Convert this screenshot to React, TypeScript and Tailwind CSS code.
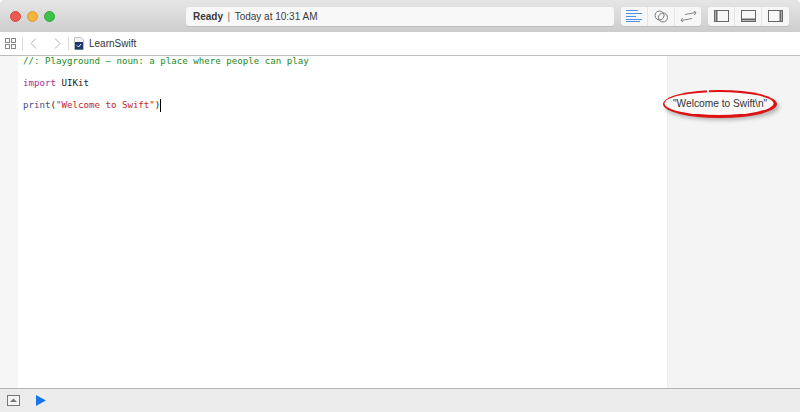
const sans = "font-['Liberation_Sans',Arial,sans-serif]";

function TrafficLights() {
  return (
    <div className="flex gap-[6px]">
      <span className="w-[11px] h-[11px] rounded-full bg-[#ee5a52] border border-[#d8473f]" />
      <span className="w-[11px] h-[11px] rounded-full bg-[#f5b43c] border border-[#dd9e2c]" />
      <span className="w-[11px] h-[11px] rounded-full bg-[#3fc04a] border border-[#30a83b]" />
    </div>
  );
}

function EditorModes() {
  return (
    <div className="flex h-[19px] rounded-[3px] bg-[#f7f7f7] shadow-[0_1px_0_#bdbdbd]">
      <div className="w-[27px] flex items-center justify-center border-r border-[#e6e6e6]">
        <svg width="16" height="12" viewBox="0 0 16 12" stroke="#4a90e8" strokeWidth="1" fill="none">
          <path d="M0 .5h12M0 3.5h16M0 6.5h10M0 9.5h16M0 11.5h14" />
        </svg>
      </div>
      <div className="w-[27px] flex items-center justify-center border-r border-[#e6e6e6]">
        <svg width="15" height="13" viewBox="0 0 15 13" stroke="#777" strokeWidth="1" fill="none">
          <circle cx="5.5" cy="5.5" r="4.5" />
          <circle cx="9" cy="7.5" r="4.5" />
        </svg>
      </div>
      <div className="w-[26px] flex items-center justify-center">
        <svg width="17" height="11" viewBox="0 0 17 11" stroke="#888" strokeWidth="1" fill="none">
          <path d="M5 3.5 L16 1.500M13.500 0l2.500 1.500-1.500 2.500M1 9.500 L12 7.500M2.500 7l-1.500 2.500L3.500 11" />
        </svg>
      </div>
    </div>
  );
}

function PanelToggles() {
  return (
    <div className="flex h-[19px] rounded-[3px] bg-[#f7f7f7] shadow-[0_1px_0_#bdbdbd]">
      <div className="w-[27px] flex items-center justify-center border-r border-[#e6e6e6]">
        <svg width="15" height="12" viewBox="0 0 15 12" stroke="#666" fill="none">
          <rect x=".5" y=".5" width="14" height="11" />
          <path d="M2.5 1v10" strokeWidth="2" />
        </svg>
      </div>
      <div className="w-[27px] flex items-center justify-center border-r border-[#e6e6e6]">
        <svg width="15" height="12" viewBox="0 0 15 12" stroke="#666" fill="none">
          <rect x=".5" y=".5" width="14" height="11" />
          <path d="M1 9.5h13" strokeWidth="2" />
        </svg>
      </div>
      <div className="w-[27px] flex items-center justify-center">
        <svg width="15" height="12" viewBox="0 0 15 12" stroke="#666" fill="none">
          <rect x=".5" y=".5" width="14" height="11" />
          <path d="M12.5 1v10" strokeWidth="2" />
        </svg>
      </div>
    </div>
  );
}

function TitleBar() {
  return (
    <div className="h-[32px] flex items-center pl-[10px] pr-[11px] bg-gradient-to-b from-[#e6e6e6] to-[#cdcdcd] rounded-t-[4px]">
      <TrafficLights />
      <div className={`ml-[131px] w-[428px] h-[19px] flex items-center pl-[7px] rounded-[3px] bg-[#f8f8f8] shadow-[0_1px_0_#bdbdbd] text-[10px] text-[#3a3a3a] ${sans}`}>
        <span className="font-bold">Ready</span>
        <span className="mx-[4.500px] text-[#777]">|</span>
        <span>Today at 10:31 AM</span>
      </div>
      <div className="ml-[7px]">
        <EditorModes />
      </div>
      <div className="ml-[7px]">
        <PanelToggles />
      </div>
    </div>
  );
}

function NavBar() {
  return (
    <div className="h-[24px] flex items-center pl-[5px] bg-white border-b border-[#bdbdbd]">
      <svg width="11" height="11" viewBox="0 0 11 11" stroke="#888" fill="none">
        <rect x=".5" y=".5" width="4" height="4" />
        <rect x="6.5" y=".5" width="4" height="4" />
        <rect x=".5" y="6.5" width="4" height="4" />
        <rect x="6.5" y="6.5" width="4" height="4" />
      </svg>
      <span className="ml-[6px] w-px h-[13px] bg-[#dcdcdc]" />
      <svg className="ml-[7px]" width="7" height="11" viewBox="0 0 7 11" stroke="#b0b0b0" fill="none">
        <path d="M6 .5L1 5.5l5 5" />
      </svg>
      <svg className="ml-[17px]" width="7" height="11" viewBox="0 0 7 11" stroke="#b0b0b0" fill="none">
        <path d="M1 .5l5 5-5 5" />
      </svg>
      <span className="ml-[7px] w-px h-[13px] bg-[#dcdcdc]" />
      <svg className="ml-[5px]" width="10" height="13" viewBox="0 0 10 13">
        <path d="M.5.5H7L9.500 3v9.500H.5z" fill="#f4f4f4" stroke="#bdbdbd" />
        <rect x="1" y="5" width="8" height="7.500" fill="#1d3a6e" />
        <path d="M3 8.500l1.500 1.500 2.500-3" stroke="#fff" fill="none" />
      </svg>
      <span className={`ml-[5px] text-[10px] text-[#333] ${sans}`}>LearnSwift</span>
    </div>
  );
}

function Editor() {
  return (
    <div className="flex-1 flex min-h-0 bg-white">
      <div className="w-[18px] bg-[#f6f6f6]" />
      <pre className="flex-1 pl-[5px] font-['DejaVu_Sans_Mono',monospace] text-[9.15px] leading-[22px] -mt-[6px] text-[#222]">
        <div className="text-[#1a8a1d]">//: Playground – noun: a place where people can play</div>
        <div>
          <span className="text-[#a3309b]">import</span> UIKit
        </div>
        <div className="flex items-center">
          <span className="text-[#3f4e8a]">print</span>(<span className="text-[#c4261d]">"Welcome to Swift"</span>)
          <span className="w-px h-[13px] bg-black" />
        </div>
      </pre>
      <div className="relative w-[133px] bg-[#f4f4f4] border-l border-[#ececec]">
        <svg className="absolute left-[-8px] top-[30px]" width="124" height="38" viewBox="0 0 124 38" fill="none">
          <defs>
            <filter id="soft" x="-10%" y="-40%" width="120%" height="180%">
              <feGaussianBlur stdDeviation="2" />
            </filter>
          </defs>
          <ellipse cx="62" cy="21" rx="57" ry="13" fill="#777" opacity=".55" filter="url(#soft)" />
          <ellipse cx="60" cy="18" rx="57" ry="14" fill="#dd1212" />
          <ellipse cx="59" cy="17.500" rx="54.500" ry="11.500" fill="#f9f9f9" />
          <rect x="47" y="3" width="2" height="3.500" fill="#f9f9f9" />
        </svg>
        <span className={`absolute left-[5px] top-[42px] text-[10.200px] leading-[12px] whitespace-nowrap text-[#333] ${sans}`}>"Welcome to Swift\n"</span>
      </div>
    </div>
  );
}

function BottomBar() {
  return (
    <div className="h-[24px] flex items-center pl-[7px] bg-[#ececec] border-t border-[#b5b5b5]">
      <svg width="13" height="11" viewBox="0 0 13 11">
        <rect x=".5" y=".5" width="12" height="10" fill="#f4f4f4" stroke="#777" />
        <path d="M3 7l3.500-3.500L10 7z" fill="#777" />
      </svg>
      <svg className="ml-[16px]" width="10" height="11" viewBox="0 0 10 11">
        <path d="M0 0l10 5.500L0 11z" fill="#1a76e8" />
      </svg>
    </div>
  );
}

export default function App() {
  return (
    <div className="w-[800px] h-[412px] flex flex-col overflow-hidden bg-white">
      <TitleBar />
      <NavBar />
      <Editor />
      <BottomBar />
    </div>
  );
}
